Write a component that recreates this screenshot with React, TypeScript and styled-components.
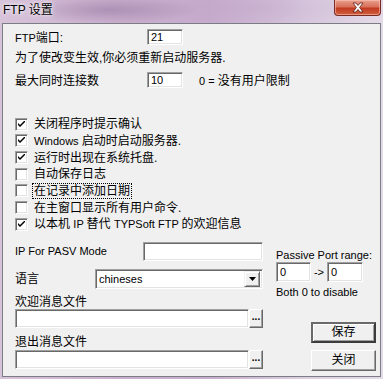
import React from "react";
import styled, { createGlobalStyle } from "styled-components";

const GlobalStyle = createGlobalStyle`
  html, body { margin: 0; padding: 0; }
  body { width: 383px; height: 379px; overflow: hidden; background: #c9b3cf; }
`;

const FONT = `"Liberation Sans", "Noto Sans CJK SC", sans-serif`;

const Window = styled.div`
  width: 383px;
  height: 379px;
  display: flex;
  flex-direction: column;
  background:
    radial-gradient(ellipse 90px 14px at 110px 10px, rgba(150,120,160,0.55), transparent),
    radial-gradient(ellipse 140px 30px at 250px 8px, rgba(190,160,200,0.5), transparent),
    linear-gradient(90deg, #d7c3da 0%, #cbb0cf 30%, #c8aecd 55%, #ddd0e2 80%, #e4dae8 100%);
  font-family: ${FONT};
  font-size: 12px;
  color: #000;
  overflow: hidden;
`;

const TitleBar = styled.div`
  height: 23px;
  display: flex;
  align-items: flex-start;
  justify-content: space-between;
  flex-shrink: 0;
`;

const Title = styled.div`
  padding: 3px 0 0 3px;
  font-size: 12px;
  line-height: 14px;
  text-shadow: 0 0 6px rgba(255,255,255,0.95), 0 0 3px rgba(255,255,255,0.95);
`;

const CloseButton = styled.div`
  width: 45px;
  height: 15px;
  margin-right: 2px;
  border: 1px solid #7a2a22;
  border-top: none;
  border-radius: 0 0 4px 4px;
  background: linear-gradient(180deg, #e8a08e 0%, #d9705a 45%, #c13a22 55%, #d0603e 100%);
  box-shadow: inset 0 0 0 1px rgba(255,200,190,0.55);
  display: flex;
  align-items: center;
  justify-content: center;
`;

const Client = styled.div`
  flex: 1;
  margin: 0 2px 2px 2px;
  border: 1px solid #7c7c84;
  background: #f0f0f0;
  padding: 5px 0 0 12px;
  display: flex;
  flex-direction: column;
`;

const Lat = styled.span`
  font-size: 11px;
`;

const Row = styled.div<{ $mt?: number; $h?: number }>`
  display: flex;
  align-items: center;
  height: ${(p) => p.$h ?? 16}px;
  margin-top: ${(p) => p.$mt ?? 0}px;
`;

const Label = styled.span<{ $w?: number; $drop?: number }>`
  width: ${(p) => (p.$w ? `${p.$w}px` : "auto")};
  padding-top: ${(p) => p.$drop ?? 0}px;
  flex-shrink: 0;
  white-space: nowrap;
  line-height: 14px;
`;

const TextLine = styled.div<{ $mt?: number }>`
  margin-top: ${(p) => p.$mt ?? 0}px;
  line-height: 14px;
  height: 14px;
  white-space: nowrap;
`;

const Field = styled.div<{ $w: number; $h?: number }>`
  box-sizing: border-box;
  width: ${(p) => p.$w}px;
  height: ${(p) => p.$h ?? 16}px;
  background: #fff;
  border-style: solid;
  border-width: 1px;
  border-color: #a0a0a0 #fff #fff #a0a0a0;
  box-shadow: inset 1px 1px 0 #696969, inset -1px -1px 0 #e3e3e3;
  padding: 0 0 0 3px;
  display: flex;
  align-items: center;
  font-size: 11px;
  line-height: 14px;
  white-space: nowrap;
  flex-shrink: 0;
`;

const Note = styled.span`
  margin-left: 16px;
  padding-top: 2px;
  line-height: 14px;
  white-space: nowrap;
`;

const CheckList = styled.div`
  margin-top: 28px;
  display: flex;
  flex-direction: column;
`;

const CheckRow = styled.div`
  height: 16.67px;
  display: flex;
  align-items: center;
`;

const Box = styled.div`
  box-sizing: border-box;
  width: 13px;
  height: 13px;
  background: #fff;
  border-style: solid;
  border-width: 1px;
  border-color: #a0a0a0 #fff #fff #a0a0a0;
  box-shadow: inset 1px 1px 0 #696969, inset -1px -1px 0 #e3e3e3;
  display: flex;
  align-items: center;
  justify-content: center;
  flex-shrink: 0;
`;

const CheckText = styled.span<{ $focus?: boolean }>`
  margin-left: 5px;
  line-height: 14px;
  padding: 0 1px;
  white-space: nowrap;
  outline: ${(p) => (p.$focus ? "1px dotted #000" : "none")};
`;

const Lower = styled.div`
  margin-top: 9px;
  display: flex;
`;

const LeftCol = styled.div`
  width: 248px;
  display: flex;
  flex-direction: column;
`;

const RightCol = styled.div`
  margin-left: 13px;
  display: flex;
  flex-direction: column;
`;

const Combo = styled(Field)`
  padding-right: 2px;
  justify-content: space-between;
`;

const ComboButton = styled.div`
  box-sizing: border-box;
  width: 16px;
  height: 16px;
  background: #f0f0f0;
  border-style: solid;
  border-width: 1px;
  border-color: #f0f0f0 #696969 #696969 #f0f0f0;
  box-shadow: inset 1px 1px 0 #fff, inset -1px -1px 0 #a0a0a0;
  display: flex;
  align-items: center;
  justify-content: center;
`;

const FileRow = styled.div<{ $mt: number }>`
  display: flex;
  margin-top: ${(p) => p.$mt}px;
`;

const SmallButton = styled.div`
  box-sizing: border-box;
  width: 14px;
  height: 19px;
  background: #f0f0f0;
  border-style: solid;
  border-width: 1px;
  border-color: #fff #696969 #696969 #fff;
  box-shadow: inset -1px -1px 0 #a0a0a0;
  display: flex;
  align-items: center;
  justify-content: center;
  font-weight: bold;
  font-size: 10px;
  line-height: 10px;
  padding-bottom: 3px;
`;

const PortRow = styled.div`
  display: flex;
  align-items: center;
  height: 20px;
`;

const Arrow = styled.span`
  width: 16px;
  text-align: center;
  font-size: 11px;
  line-height: 14px;
`;

const PushButton = styled.div<{ $mt: number; $default?: boolean }>`
  box-sizing: border-box;
  margin-left: 35px;
  margin-top: ${(p) => p.$mt}px;
  width: 65px;
  height: 21px;
  background: #f0f0f0;
  border-style: solid;
  border-width: ${(p) => (p.$default ? 2 : 1)}px;
  border-color: ${(p) =>
    p.$default ? "#6a6a6a #3c3c3c #3c3c3c #6a6a6a" : "#fff #696969 #696969 #fff"};
  box-shadow: ${(p) =>
    p.$default ? "inset 1px 1px 0 #fff, inset -1px -1px 0 #a0a0a0" : "inset -1px -1px 0 #a0a0a0"};
  display: flex;
  align-items: center;
  justify-content: center;
  line-height: 14px;
`;

const Check = () => (
  <svg width="7" height="7" viewBox="0 0 7 7">
    <path d="M0 2 L0 4 L2 6 L7 1 L7 -1 L2 4 Z" fill="#000" />
  </svg>
);

const checks: { key: string; text: React.ReactNode; on: boolean; focus?: boolean }[] = [
  { key: "a", text: "关闭程序时提示确认", on: true },
  { key: "b", text: <><Lat>Windows </Lat>启动时启动服务器.</>, on: true },
  { key: "c", text: "运行时出现在系统托盘.", on: true },
  { key: "d", text: "自动保存日志", on: false },
  { key: "e", text: "在记录中添加日期", on: false, focus: true },
  { key: "f", text: "在主窗口显示所有用户命令.", on: false },
  {
    key: "g",
    text: <>以本机 <Lat>IP </Lat>替代 <Lat>TYPSoft FTP </Lat>的欢迎信息</>,
    on: true,
  },
];

export default function App() {
  return (
    <>
      <GlobalStyle />
      <Window>
        <TitleBar>
          <Title>FTP 设置</Title>
          <CloseButton>
            <svg width="14" height="11" viewBox="0 0 14 11">
              <path
                d="M2 1 L5 1 L7 3.5 L9 1 L12 1 L8.6 5.5 L12 10 L9 10 L7 7.5 L5 10 L2 10 L5.4 5.5 Z"
                fill="#fff"
                stroke="#5a1a14"
                strokeWidth="0.8"
                strokeLinejoin="round"
              />
            </svg>
          </CloseButton>
        </TitleBar>
        <Client>
          <Row>
            <Label $w={132} $drop={1}><Lat>FTP</Lat>端口:</Label>
            <Field $w={36}>21</Field>
          </Row>
          <TextLine $mt={6}>为了使改变生效,你必须重新启动服务器.</TextLine>
          <Row $mt={7}>
            <Label $w={132} $drop={2}>最大同时连接数</Label>
            <Field $w={36}>10</Field>
            <Note><Lat>0 = </Lat>没有用户限制</Note>
          </Row>
          <CheckList>
            {checks.map((c) => (
              <CheckRow key={c.key}>
                <Box>{c.on && <Check />}</Box>
                <CheckText $focus={c.focus}>{c.text}</CheckText>
              </CheckRow>
            ))}
          </CheckList>
          <Lower>
            <LeftCol>
              <Row $h={19}>
                <Label $w={128}><Lat>IP For PASV Mode</Lat></Label>
                <Field $w={120} $h={19} />
              </Row>
              <Row $h={20} $mt={8}>
                <Label $w={80} $drop={1}>语言</Label>
                <Combo $w={168} $h={20}>
                  chineses
                  <ComboButton>
                    <svg width="7" height="4" viewBox="0 0 7 4">
                      <path d="M0 0 H7 L3.5 4 Z" fill="#000" />
                    </svg>
                  </ComboButton>
                </Combo>
              </Row>
              <TextLine $mt={6}>欢迎消息文件</TextLine>
              <FileRow $mt={0}>
                <Field $w={234} $h={19} />
                <SmallButton>...</SmallButton>
              </FileRow>
              <TextLine $mt={7}>退出消息文件</TextLine>
              <FileRow $mt={1}>
                <Field $w={234} $h={19} />
                <SmallButton>...</SmallButton>
              </FileRow>
            </LeftCol>
            <RightCol>
              <TextLine $mt={6}><Lat>Passive Port range:</Lat></TextLine>
              <PortRow>
                <Field $w={35} $h={20}>0</Field>
                <Arrow>-&gt;</Arrow>
                <Field $w={36} $h={20}>0</Field>
              </PortRow>
              <TextLine $mt={3}><Lat>Both 0 to disable</Lat></TextLine>
              <PushButton $mt={23} $default>保存</PushButton>
              <PushButton $mt={7}>关闭</PushButton>
            </RightCol>
          </Lower>
        </Client>
      </Window>
    </>
  );
}
